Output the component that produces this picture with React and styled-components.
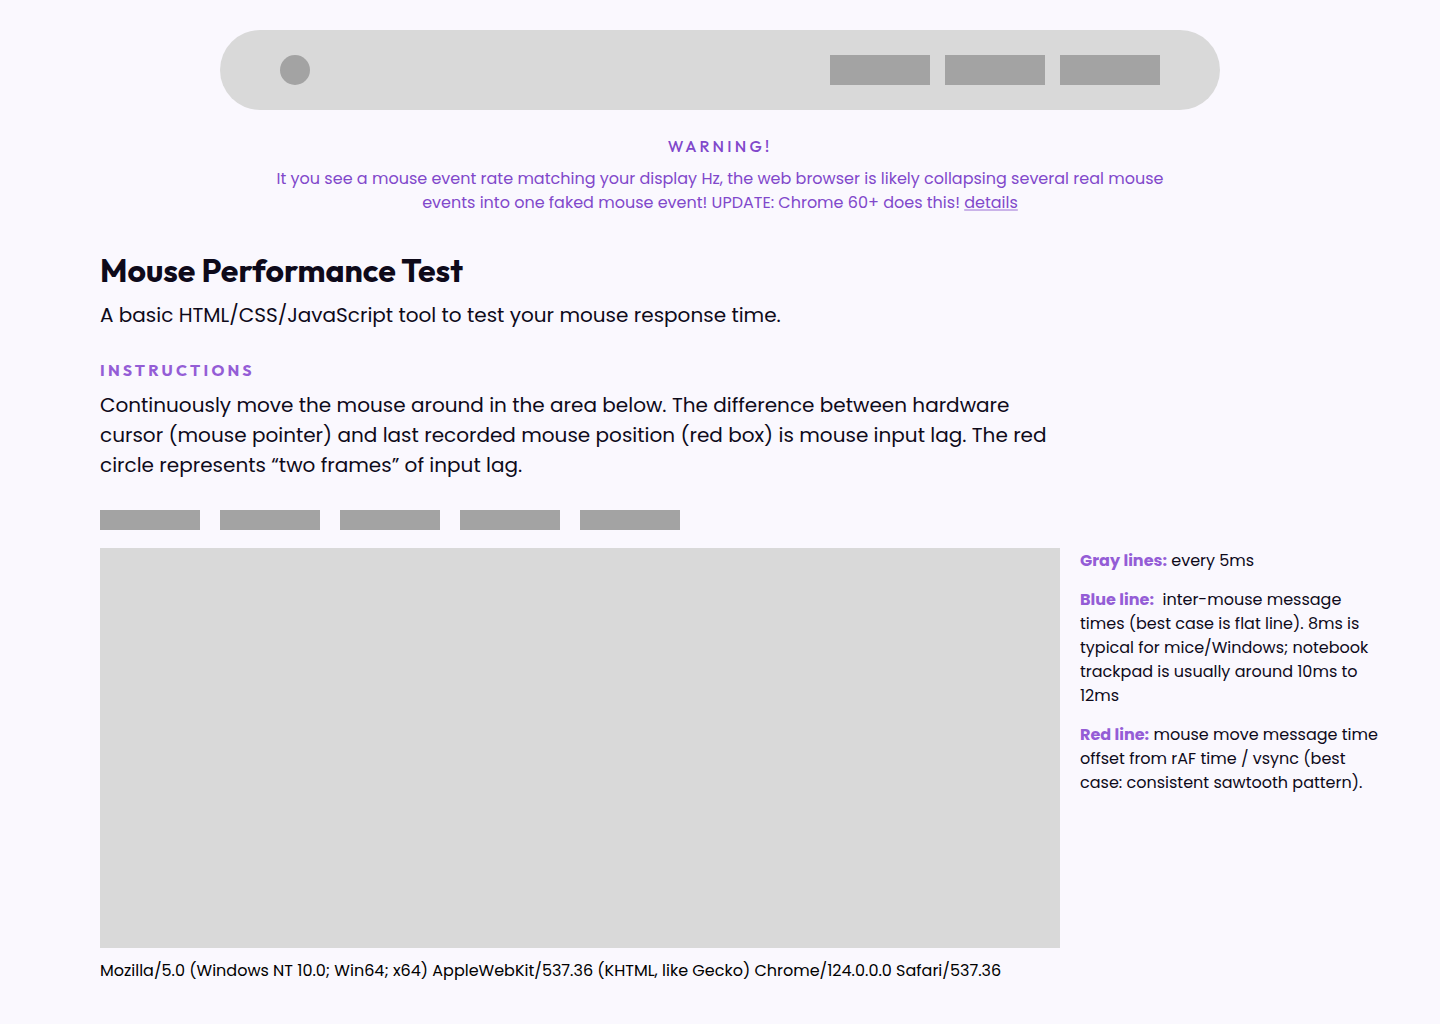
import React from "react";
import styled, { createGlobalStyle } from "styled-components";

const bodyFont = `Poppins, Inter, "Open Sans", sans-serif`;
const headingFont = `Outfit, Lato, Inter, sans-serif`;

const GlobalStyle = createGlobalStyle`
  *, *::before, *::after { box-sizing: border-box; }
  body {
    margin: 0;
    background: #faf8fe;
    color: #0e0a1a;
    font-family: ${bodyFont};
    font-size: 16px;
    line-height: 24px;
  }
  h1, h2, p { margin: 0; }
`;

const Page = styled.div`
  display: flex;
  flex-direction: column;
  padding: 30px 0 40px;
`;

const TopSection = styled.div`
  display: flex;
  flex-direction: column;
  align-items: center;
  padding: 0 20px;
`;

const Header = styled.header`
  display: flex;
  align-items: center;
  justify-content: space-between;
  width: 100%;
  max-width: 1000px;
  height: 80px;
  padding: 0 60px;
  border-radius: 40px;
  background: #d9d9d9;
`;

const Logo = styled.button`
  width: 30px;
  height: 30px;
  padding: 0;
  border: 0;
  border-radius: 50%;
  background: #a3a3a3;
  cursor: pointer;
`;

const ButtonRow = styled.nav`
  display: flex;
  flex-wrap: wrap;
  gap: ${({ $gap }) => $gap};
`;

const BlockButton = styled.button`
  width: 100px;
  height: ${({ $tall }) => ($tall ? "30px" : "20px")};
  padding: 0;
  border: 0;
  background: #a3a3a3;
  cursor: pointer;
`;

const Warning = styled.section`
  display: flex;
  flex-direction: column;
  gap: 11px;
  max-width: 900px;
  margin-top: 26px;
  color: #8148cb;
  text-align: center;
`;

const Label = styled.h2`
  color: ${({ $strong }) => ($strong ? "#945dd6" : "#8148cb")};
  font-family: ${headingFont};
  font-size: 16px;
  font-weight: ${({ $strong }) => ($strong ? 700 : 500)};
  line-height: 20px;
  letter-spacing: 0.2em;
  text-transform: uppercase;
`;

const DetailsLink = styled.a`
  color: inherit;
  text-decoration: underline 2px #cab3e9;
  text-underline-offset: 1px;
`;

const Main = styled.main`
  display: flex;
  flex-direction: column;
  margin-top: 35px;
  padding: 0 60px 0 100px;
`;

const Title = styled.h1`
  font-family: ${headingFont};
  font-size: 32px;
  font-weight: 700;
  line-height: 40px;
`;

const Lead = styled.p`
  max-width: 960px;
  font-size: 20px;
  line-height: 30px;
`;

const Intro = styled.section`
  display: flex;
  flex-direction: column;
  gap: 10px;
  margin-bottom: 30px;
`;

const TestGrid = styled.div`
  display: grid;
  grid-template-columns: minmax(0, 1fr) 300px;
  column-gap: 20px;
  row-gap: 11px;
  margin-top: 18px;
`;

const TestArea = styled.div`
  height: 400px;
  background: #d9d9d9;
`;

const Legend = styled.aside`
  display: flex;
  flex-direction: column;
  gap: 15px;
  padding-top: 1px;
`;

const Term = styled.strong`
  color: #945dd6;
  font-weight: 700;
`;

const Agent = styled.p`
  color: #000000;
`;

const navItems = ["Home", "Tests", "About"];
const toolItems = ["Mode", "Scale", "Trail", "Reset", "Pause"];

export default function App() {
  return (
    <>
      <GlobalStyle />
      <Page>
        <TopSection>
          <Header>
            <Logo aria-label="Site logo" />
            <ButtonRow $gap="15px" aria-label="Main">
              {navItems.map((item) => (
                <BlockButton key={item} $tall aria-label={item} />
              ))}
            </ButtonRow>
          </Header>
          <Warning>
            <Label>Warning!</Label>
            <p>
              It you see a mouse event rate matching your display Hz, the web browser is likely collapsing several real mouse
              events into one faked mouse event! UPDATE: Chrome 60+ does this! <DetailsLink href="#details">details</DetailsLink>
            </p>
          </Warning>
        </TopSection>
        <Main>
          <Intro>
            <Title>Mouse Performance Test</Title>
            <Lead>A basic HTML/CSS/JavaScript tool to test your mouse response time.</Lead>
          </Intro>
          <Intro>
            <Label $strong>Instructions</Label>
            <Lead>
              Continuously move the mouse around in the area below. The difference between hardware cursor (mouse
              pointer) and last recorded mouse position (red box) is mouse input lag. The red circle represents “two
              frames” of input lag.
            </Lead>
          </Intro>
          <ButtonRow $gap="20px" aria-label="Test tools">
            {toolItems.map((item) => (
              <BlockButton key={item} aria-label={item} />
            ))}
          </ButtonRow>
          <TestGrid>
            <TestArea />
            <Legend>
              <p>
                <Term>Gray lines:</Term> every 5ms
              </p>
              <p>
                <Term>Blue line:</Term>&nbsp; inter-mouse message times (best case is flat line). 8ms is typical for
                mice/Windows; notebook trackpad is usually around 10ms to 12ms
              </p>
              <p>
                <Term>Red line:</Term> mouse move message time offset from rAF time / vsync (best case: consistent
                sawtooth pattern).
              </p>
            </Legend>
            <Agent>
              Mozilla/5.0 (Windows NT 10.0; Win64; x64) AppleWebKit/537.36 (KHTML, like Gecko) Chrome/124.0.0.0
              Safari/537.36
            </Agent>
          </TestGrid>
        </Main>
      </Page>
    </>
  );
}
